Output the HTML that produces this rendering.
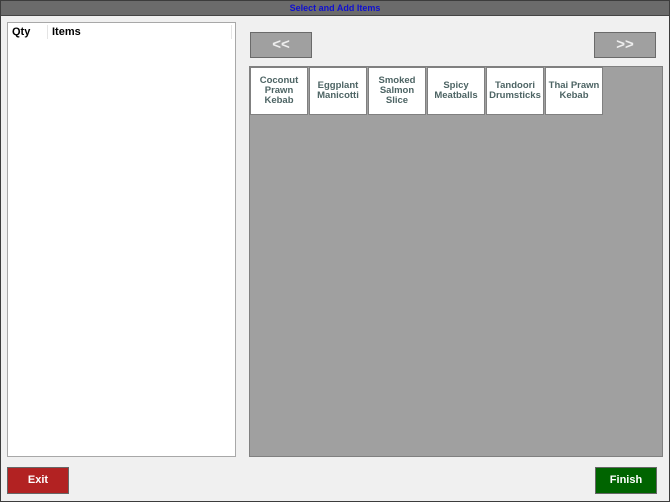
<!DOCTYPE html>
<html><head><style>
body{margin:0;width:670px;height:502px;overflow:hidden;font-family:"Liberation Sans",sans-serif;}
.win{position:absolute;left:0;top:0;width:668px;height:500px;border:1px solid #3c3c3c;background:#f0f0f0;}
.title{position:absolute;left:0;top:0;width:668px;height:14px;background:#6b6b6b;border-bottom:1px solid #444;color:#1010d0;font-size:9px;font-weight:bold;text-align:center;line-height:14px;}
.list{position:absolute;left:6px;top:21px;width:227px;height:433px;background:#fff;border:1px solid #a8a8a8;}
.hd{position:absolute;top:3px;font-size:11px;font-weight:bold;color:#000;}
.nav{position:absolute;top:31px;width:60px;height:24px;background:#a0a0a0;border:1px solid #6a6a6a;color:#eee;font-weight:bold;font-size:15px;text-align:center;line-height:23px;}
.grid{position:absolute;left:248px;top:65px;width:412px;height:389px;background:#a0a0a0;border:1px solid #808080;}
.tile{position:absolute;top:0px;width:56px;height:46px;background:#fff;border:1px solid #808080;color:#4d6464;font-size:9.5px;font-weight:bold;text-align:center;display:flex;align-items:center;justify-content:center;line-height:10px;}
.btn{position:absolute;top:466px;width:60px;height:25px;border:1px solid #666;color:#fff;font-weight:bold;font-size:11px;text-align:center;line-height:25px;}
</style></head><body>
<div class="win">
<div class="title">Select and Add Items</div>
<div class="list">
<div class="hd" style="left:4px">Qty</div>
<div style="position:absolute;left:39px;top:2px;width:1px;height:14px;background:#e4e4e4"></div>
<div class="hd" style="left:44px">Items</div>
<div style="position:absolute;left:223px;top:2px;width:1px;height:14px;background:#e4e4e4"></div>
</div>
<div class="nav" style="left:249px">&lt;&lt;</div>
<div class="nav" style="left:593px">&gt;&gt;</div>
<div class="grid">
<div class="tile" style="left:0px">Coconut<br>Prawn<br>Kebab</div>
<div class="tile" style="left:59px">Eggplant<br>Manicotti</div>
<div class="tile" style="left:118px">Smoked<br>Salmon<br>Slice</div>
<div class="tile" style="left:177px">Spicy<br>Meatballs</div>
<div class="tile" style="left:236px">Tandoori<br>Drumsticks</div>
<div class="tile" style="left:295px">Thai Prawn<br>Kebab</div>
</div>
<div class="btn" style="left:6px;background:#b22222">Exit</div>
<div class="btn" style="left:594px;background:#006400">Finish</div>
</div>
</body></html>
